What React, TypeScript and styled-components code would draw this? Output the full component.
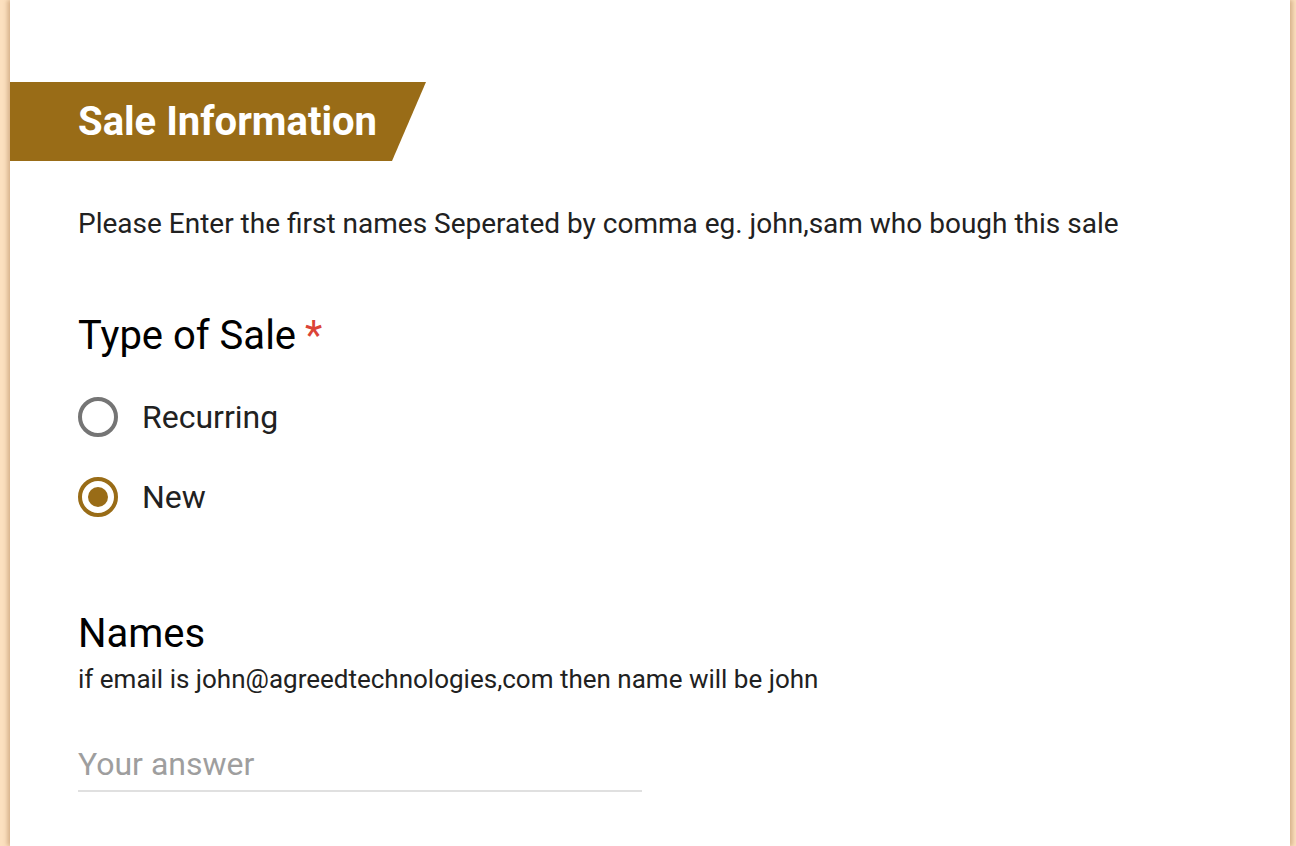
import React from "react";
import styled, { createGlobalStyle } from "styled-components";

const Global = createGlobalStyle`
  html, body { margin: 0; padding: 0; background: #fde0bd; }
  body { font-family: Roboto, "Noto Sans", Arial, sans-serif; }
`;

const Page = styled.div`
  width: 1296px;
  height: 846px;
  overflow: hidden;
  background: #fce0bf;
  display: flex;
  justify-content: flex-start;
  padding-left: 10px;
  box-sizing: border-box;
`;

const Card = styled.div`
  width: 1280px;
  background: #fff;
  box-shadow: -3px 0 4px rgba(160, 110, 60, 0.35), 3px 0 4px rgba(160, 110, 60, 0.35);
  padding-top: 82px;
  display: flex;
  flex-direction: column;
`;

const Banner = styled.div`
  width: 416px;
  height: 79px;
  background: #996c17;
  clip-path: polygon(0 0, 100% 0, 382px 100%, 0 100%);
  display: flex;
  align-items: center;
  padding-left: 68px;
  box-sizing: border-box;
`;

const BannerTitle = styled.h1`
  margin: 0;
  color: #fff;
  font-size: 40px;
  font-weight: 700;
  line-height: 44px;
`;

const Body = styled.div`
  padding-left: 68px;
  display: flex;
  flex-direction: column;
`;

const Description = styled.p`
  margin: 47px 0 0;
  font-size: 28px;
  line-height: 32px;
  color: #212121;
`;

const Question = styled.div<{ $top: number }>`
  margin-top: ${(p) => p.$top}px;
  display: flex;
  flex-direction: column;
`;

const QTitle = styled.div`
  font-size: 40px;
  line-height: 48px;
  color: #000;
  display: flex;
  align-items: baseline;
  gap: 9px;
`;

const Star = styled.span`
  color: #db4437;
  font-size: 40px;
`;

const Options = styled.div`
  display: flex;
  flex-direction: column;
  gap: 40px;
  margin-top: 37px;
`;

const Option = styled.label`
  display: flex;
  align-items: center;
  gap: 24px;
  font-size: 32px;
  line-height: 40px;
  color: #212121;
`;

const Radio = styled.span<{ $on?: boolean }>`
  width: 40px;
  height: 40px;
  flex: none;
  box-sizing: border-box;
  border-radius: 50%;
  border: 4px solid ${(p) => (p.$on ? "#996c17" : "#757575")};
  display: flex;
  align-items: center;
  justify-content: center;
  &::after {
    content: "";
    width: 20px;
    height: 20px;
    border-radius: 50%;
    background: #996c17;
    display: ${(p) => (p.$on ? "block" : "none")};
  }
`;

const Helper = styled.div`
  font-size: 26px;
  line-height: 30px;
  color: #212121;
  margin-top: 6px;
`;

const Answer = styled.div`
  margin-top: 51px;
  width: 564px;
  border-bottom: 2px solid #e0e0e0;
  padding-bottom: 7px;
  font-size: 32px;
  line-height: 38px;
  color: #9e9e9e;
`;

export default function App() {
  return (
    <>
      <Global />
      <Page>
        <Card>
          <Banner>
            <BannerTitle>Sale Information</BannerTitle>
          </Banner>
          <Body>
            <Description>
              Please Enter the first names Seperated by comma eg. john,sam who bough this sale
            </Description>
            <Question $top={72}>
              <QTitle>
                Type of Sale<Star>*</Star>
              </QTitle>
              <Options>
                <Option>
                  <Radio />
                  Recurring
                </Option>
                <Option>
                  <Radio $on />
                  New
                </Option>
              </Options>
            </Question>
            <Question $top={93}>
              <QTitle>Names</QTitle>
              <Helper>if email is john@agreedtechnologies,com then name will be john</Helper>
              <Answer>Your answer</Answer>
            </Question>
          </Body>
        </Card>
      </Page>
    </>
  );
}
